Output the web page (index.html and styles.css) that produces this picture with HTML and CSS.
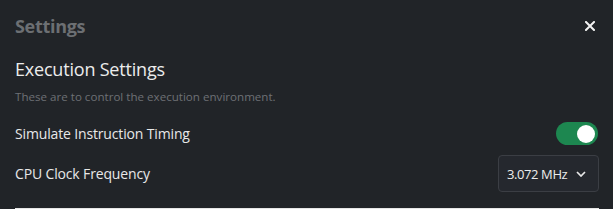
FILE: index.html
```html
<!DOCTYPE html>
<html>
<head>
<meta charset="utf-8">
<link rel="stylesheet" href="styles.css">
</head>
<body>
<div class="modal">
  <header class="modal-header">
    <h1 class="modal-title">Settings</h1>
    <button class="close" aria-label="Close">
      <svg width="10" height="10" viewBox="0 0 10 10"><path d="M1 1L9 9M9 1L1 9" stroke="#f2f2f2" stroke-width="2" stroke-linecap="square"/></svg>
    </button>
  </header>
  <section class="section">
    <h2 class="section-title">Execution Settings</h2>
    <p class="section-desc">These are to control the execution environment.</p>
    <div class="row row-first">
      <span class="label">Simulate Instruction Timing</span>
      <span class="toggle"><span class="knob"></span></span>
    </div>
    <div class="row">
      <span class="label">CPU Clock Frequency</span>
      <span class="select"><span class="select-value">3.072 MHz</span>
        <svg width="10" height="6" viewBox="0 0 10 6"><path d="M1 1L5 5L9 1" fill="none" stroke="#e8e8e8" stroke-width="1.7"/></svg>
      </span>
    </div>
    <div class="next"></div>
  </section>
</div>
</body>
</html>
```
FILE: styles.css
```css
html, body {
  margin: 0;
  padding: 0;
  background: #212428;
  height: 100%;
  overflow: hidden;
}
.modal {
  font-family: "Open Sans", "Noto Sans", sans-serif;
  color: #e8e8e8;
  padding: 0 14px 0 15px;
}
.modal-header {
  display: flex;
  justify-content: space-between;
  align-items: center;
  height: 52px;
}
.modal-title {
  margin: 0;
  font-size: 18px;
  font-weight: 700;
  color: #6c6f73;
  letter-spacing: -0.3px;
}
.close {
  background: none;
  border: 0;
  padding: 0;
  margin-right: 4px;
  display: flex;
}
.section-title {
  margin: 5px 0 0;
  font-size: 18px;
  font-weight: 400;
  line-height: 24px;
  color: #ececec;
  letter-spacing: -0.2px;
}
.section-desc {
  margin: 8px 0 0;
  font-size: 11.6px;
  line-height: 16px;
  color: #6d7075;
}
.row {
  display: flex;
  justify-content: space-between;
  align-items: center;
  font-size: 14px;
  letter-spacing: -0.15px;
}
.row-first { margin-top: 17px; height: 23px; }
.row + .row { margin-top: 10px; }
.toggle {
  width: 42px;
  height: 23px;
  border-radius: 12px;
  background: #1d8750;
  position: relative;
  margin-right: 1px;
}
.knob {
  position: absolute;
  right: 3px;
  top: 2.5px;
  width: 18px;
  height: 18px;
  border-radius: 50%;
  background: #fff;
}
.select {
  display: flex;
  align-items: center;
  justify-content: space-between;
  box-sizing: border-box;
  width: 101px;
  height: 37px;
  padding: 0 12px 0 8px;
  border: 1px solid #3b3e44;
  border-radius: 4px;
  background: #25282e;
  font-size: 13px;
  letter-spacing: -0.4px;
  color: #ececec;
  white-space: nowrap;
}
.next {
  margin-top: 16px;
  height: 2px;
  background: #e6e6e6;
}
```
